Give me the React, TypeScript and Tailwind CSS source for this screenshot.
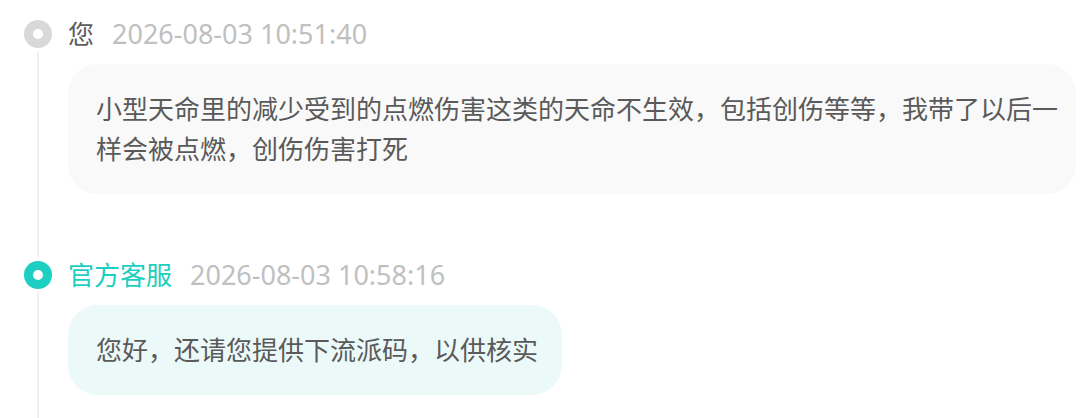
const messages = [
  {
    id: 1,
    name: '您',
    time: '2026-08-03 10:51:40',
    staff: false,
    text: '小型天命里的减少受到的点燃伤害这类的天命不生效，包括创伤等等，我带了以后一样会被点燃，创伤伤害打死',
  },
  {
    id: 2,
    name: '官方客服',
    time: '2026-08-03 10:58:16',
    staff: true,
    text: '您好，还请您提供下流派码，以供核实',
  },
];

export default function App() {
  return (
    <div
      className="h-[418px] w-[1080px] overflow-hidden bg-white pt-[16px]"
      style={{ fontFamily: '"Noto Sans", "Noto Sans CJK SC", sans-serif' }}
    >
      {messages.map((m, i) => (
        <div key={m.id} className="flex">
          <div className="ml-[24px] flex w-[28px] shrink-0 flex-col items-center">
            <div className="flex h-[36px] items-center">
              <span
                className={`flex h-[28px] w-[28px] items-center justify-center rounded-full ${
                  m.staff ? 'bg-[#1ccfc0]' : 'bg-[#d9d9d9]'
                }`}
              >
                <span className="h-[10px] w-[10px] rounded-full bg-white" />
              </span>
            </div>
            <div className="w-[2px] flex-1 bg-[#f0f0f0]" />
          </div>
          <div className={`ml-[16px] min-w-0 flex-1 pr-[4px] ${i === 0 ? 'pb-[63px]' : 'pb-[40px]'}`}>
            <div className="flex h-[36px] items-center gap-[18px] text-[27px] leading-[36px]">
              <span className={`text-[26px] ${m.staff ? 'text-[#1ccfc0]' : 'text-[#5c5c5c]'}`}>{m.name}</span>
              <span className="text-[#c0c0c0]">{m.time}</span>
            </div>
            <div
              className={`mt-[12px] rounded-[30px] py-[25px] pl-[28px] text-[26px] leading-[40px] text-[#5a5a5a] ${
                m.staff ? 'inline-block bg-[#ecf9f9] pr-[24px]' : 'block bg-[#f9f9f9] pr-[14px]'
              }`}
            >
              {m.text}
            </div>
          </div>
        </div>
      ))}
    </div>
  );
}
